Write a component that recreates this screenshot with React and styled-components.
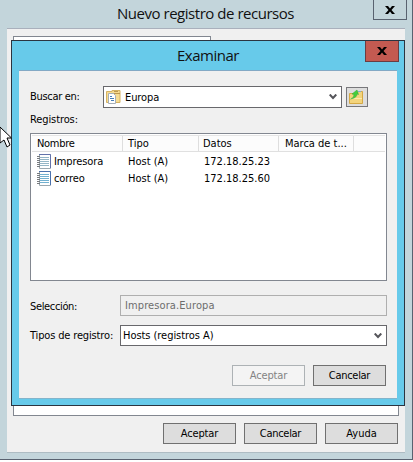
import React from "react";
import styled, { createGlobalStyle } from "styled-components";

const Global = createGlobalStyle`
  * { box-sizing: border-box; }
  html, body { margin: 0; width: 413px; height: 462px; overflow: hidden; background: #fff; }
`;

const Desktop = styled.div`
  position: relative;
  width: 413px;
  height: 462px;
  font: 11px/14px "DejaVu Sans Condensed", "DejaVu Sans", sans-serif;
  font-stretch: condensed;
  color: #000;
`;

const ParentWindow = styled.div`
  width: 413px;
  height: 460px;
  padding: 0 7px;
  background: #c3d5db;
  border-right: 1px solid #596270;
  border-bottom: 1px solid #596270;
`;

const TitleBar = styled.div`
  height: ${(p) => p.$height}px;
  padding-top: ${(p) => p.$top}px;
  padding-left: ${(p) => p.$left}px;
  font: 15px/20px "Open Sans", sans-serif;
  color: #111;
`;

const Label = styled.span`
  display: inline-block;
  white-space: pre;
  letter-spacing: ${(p) => p.$track || 0}px;
`;

const CloseButton = styled.div`
  position: absolute;
  display: grid;
  place-items: center;
  left: ${(p) => p.$x}px;
  top: ${(p) => p.$y}px;
  width: 34px;
  height: ${(p) => p.$h}px;
  background: ${(p) => (p.$active ? "#c35a51" : "#c3d5db")};
  border: 1px solid ${(p) => (p.$active ? "#6b3c42" : "#596270")};
  border-top: 0;
`;

const ParentBody = styled.div`
  width: 398px;
  height: 425px;
  background: #f0f0f0;
  border-top: 1px solid #a9b0bc;
  border-bottom: 1px solid #aebcc3;
  padding: 7px 0 0 6px;
`;

const Tab = styled.div`
  width: 198px;
  height: 20px;
  background: #fff;
  border: 1px solid #828790;
  border-bottom: 0;
`;

const TabPage = styled.div`
  width: 386px;
  height: 360px;
  background: #fff;
  border: 1px solid #828790;
`;

const ButtonRow = styled.div`
  display: flex;
  gap: 8px;
  margin: ${(p) => p.$margin};
`;

const Button = styled.div`
  width: 73px;
  height: 21px;
  padding-top: 3px;
  text-align: center;
  background: ${(p) => (p.$disabled ? "#f4f4f4" : "#dddddd")};
  border: 1px solid ${(p) => (p.$disabled ? "#adb2b5" : "#707070")};
  color: ${(p) => (p.$disabled ? "#838383" : "#000")};
`;

const Dialog = styled.div`
  position: absolute;
  left: 11px;
  top: 40px;
  width: 394px;
  height: 366px;
  padding: 0 7px;
  background: #67caea;
  border: 1px solid #2b3440;
`;

const DialogBody = styled.div`
  width: 378px;
  height: 329px;
  padding: 15px 0 0 11px;
  background: #f0f0f0;
  border-top: 1px solid #83a9c5;
  border-bottom: 1px solid #83b4cb;
`;

const Field = styled.div`
  display: flex;
  height: ${(p) => p.$height}px;
`;

const Caption = styled.div`
  width: ${(p) => p.$width}px;
  padding-top: ${(p) => p.$top || 0}px;
`;

const Combo = styled.div`
  display: flex;
  align-items: center;
  width: ${(p) => p.$width}px;
  height: ${(p) => p.$height || 21}px;
  padding: 0 4px 0 ${(p) => p.$pad}px;
  gap: 4px;
  background: ${(p) => (p.$disabled ? "#f0f0f0" : "#fff")};
  border: 1px solid ${(p) => (p.$disabled ? "#afafaf" : "#68686c")};
  color: ${(p) => (p.$disabled ? "#6d6d6d" : "#000")};
  & > span { padding-top: ${(p) => p.$drop || 0}px; }
  & > svg:last-child { margin-left: auto; }
`;

const UpButton = styled.div`
  width: 22px;
  height: 20px;
  margin: 1px 0 0 4px;
  padding: 1px 0 0 2px;
  background: #ddd;
  border: 1px solid #77777b;
`;

const List = styled.div`
  width: 357px;
  height: 148px;
  margin: 6px 0 14px;
  padding: 1px;
  background: #fff;
  border: 1px solid #828790;
`;

const Header = styled.div`
  display: grid;
  grid-template-columns: 91px 76px 80px 75px 1fr;
  height: 17px;
  margin-bottom: 1px;
  background: #fcfcfc;
  border-top: 1px solid #e5e5e5;
  border-bottom: 1px solid #e0e0e0;
`;

const HeaderCell = styled.div`
  padding: 1px 0 0 ${(p) => p.$pad || 5}px;
  border-right: 1px solid #dedede;
  white-space: nowrap;
`;

const Record = styled.div`
  display: grid;
  grid-template-columns: 17px 74px 76px 1fr;
  align-items: center;
  height: 17px;
  padding-left: 5px;
`;

const Pointer = styled.svg`
  position: absolute;
  left: 0;
  top: 126px;
`;

const CloseMark = () => (
  <svg width="10" height="8" viewBox="0 0 10 8">
    <path d="M0 0H3L5 2.400L7 0H10L6.500 4L10 8H7L5 5.600L3 8H0L3.500 4Z" fill="#000" />
  </svg>
);

const Chevron = () => (
  <svg width="8" height="6" viewBox="0 0 8 6">
    <path d="M.7 .5L4 4L7.300 .5" fill="none" stroke="#55555a" strokeWidth="2" />
  </svg>
);

const ZoneIcon = () => (
  <svg width="15" height="16" viewBox="0 0 15 16">
    <path d="M.5 2.500H6V1.500H14V13.500H.5Z" fill="#f7dc92" stroke="#d5b263" />
    <path d="M7 4.500H14M8 2.500H12" stroke="#bd9850" />
    <path d="M2.500 4.500H7.500L9.500 6.500V14.500H2.500Z" fill="#fff" stroke="#a6afb8" />
    <path d="M4 7.500H6M4 9.500H8M5 11.500H8" stroke="#477eb8" />
  </svg>
);

const FolderUp = () => (
  <svg width="16" height="16" viewBox="0 0 16 16">
    <path d="M.5 4.500H8L9 2.500H13.500V14.500H.5Z" fill="#f3d47c" stroke="#d5a944" />
    <path d="M1 9.500H13" stroke="#ffe9ab" />
    <path d="M9 2.500H12" stroke="#7eaed1" />
    <path d="M1.500 10Q5 9 5 5.500L3 5L8 1L9.500 5.500L8 5Q8 9 1.500 10Z" fill="#43ce3c" stroke="#2eaa35" strokeWidth=".5" />
  </svg>
);

const RecordIcon = ({ blue }) => (
  <svg width="14" height="15" viewBox="0 0 14 15">
    <path d="M2.500 .5H13.500V14.500H2.500Z" fill="#fff" stroke="#9aa8b0" />
    <path d="M2 .5H13.500V14" fill="none" stroke={blue ? "#4a71ad" : "#6373aa"} />
    <path d="M3 3.500H12M3 5.500H12M3 7.500H12M3 9.500H12M3 11.500H12" stroke={blue ? "#72b1d0" : "#94b6c6"} />
    <path d="M0 2.500H3M0 4.500H3M0 6.500H3M0 8.500H3M0 10.500H3M0 12.500H3" stroke="#777a7e" />
  </svg>
);

const records = [
  { name: "Impresora", ip: "172.18.25.23" },
  { name: "correo", ip: "172.18.25.60", blue: true },
];

export default function App() {
  return (
    <Desktop>
      <Global />
      <ParentWindow>
        <TitleBar $height={28} $top={3} $left={110}>
          <Label $track={-0.47}>Nuevo registro de recursos</Label>
        </TitleBar>
        <ParentBody>
          <Tab />
          <TabPage />
          <ButtonRow $margin="7px 0 0 150px">
            <Button><Label $track={-0.15}>Aceptar</Label></Button>
            <Button><Label $track={-0.3}>Cancelar</Label></Button>
            <Button><Label>Ayuda</Label></Button>
          </ButtonRow>
        </ParentBody>
      </ParentWindow>
      <CloseButton $x={373} $y={0} $h={20}><CloseMark /></CloseButton>
      <Dialog>
        <TitleBar $height={29} $top={4} $left={158}>
          <Label $track={-0.5}>Examinar</Label>
        </TitleBar>
        <DialogBody>
          <Field $height={27}>
            <Caption $width={73} $top={4}><Label $track={-0.3}>Buscar en:</Label></Caption>
            <Combo $width={239} $height={22} $pad={2} $drop={2}>
              <ZoneIcon /><Label $track={-0.1}>Europa</Label><Chevron />
            </Combo>
            <UpButton><FolderUp /></UpButton>
          </Field>
          <Label $track={-0.1}>Registros:</Label>
          <List>
            <Header>
              <HeaderCell><Label $track={-0.3}>Nombre</Label></HeaderCell>
              <HeaderCell><Label>Tipo</Label></HeaderCell>
              <HeaderCell $pad={4}><Label>Datos</Label></HeaderCell>
              <HeaderCell $pad={6}><Label>Marca de t...</Label></HeaderCell>
            </Header>
            {records.map((r) => (
              <Record key={r.name}>
                <RecordIcon blue={r.blue} />
                <Label $track={-0.1}>{r.name}</Label>
                <Label>Host (A)</Label>
                <Label>{r.ip}</Label>
              </Record>
            ))}
          </List>
          <Field $height={30}>
            <Caption $width={90} $top={5}><Label $track={-0.35}>Selección:</Label></Caption>
            <Combo $width={267} $pad={4} $disabled>
              <Label $track={0.1}>Impresora.Europa</Label>
            </Combo>
          </Field>
          <Field $height={40}>
            <Caption $width={90} $top={4}><Label $track={-0.15}>Tipos de registro:</Label></Caption>
            <Combo $width={267} $pad={2} $drop={1}>
              <Label $track={-0.05}>Hosts (registros A)</Label><Chevron />
            </Combo>
          </Field>
          <ButtonRow $margin="0 0 0 202px">
            <Button $disabled><Label $track={-0.15}>Aceptar</Label></Button>
            <Button><Label $track={-0.3}>Cancelar</Label></Button>
          </ButtonRow>
        </DialogBody>
      </Dialog>
      <CloseButton $active $x={365} $y={41} $h={21}><CloseMark /></CloseButton>
      <Pointer width="12" height="22" viewBox="0 0 12 22">
        <path d="M0 1L11.500 12H7L10 19L7 21L4 14L0 17Z" fill="#fff" stroke="#000" />
      </Pointer>
    </Desktop>
  );
}
